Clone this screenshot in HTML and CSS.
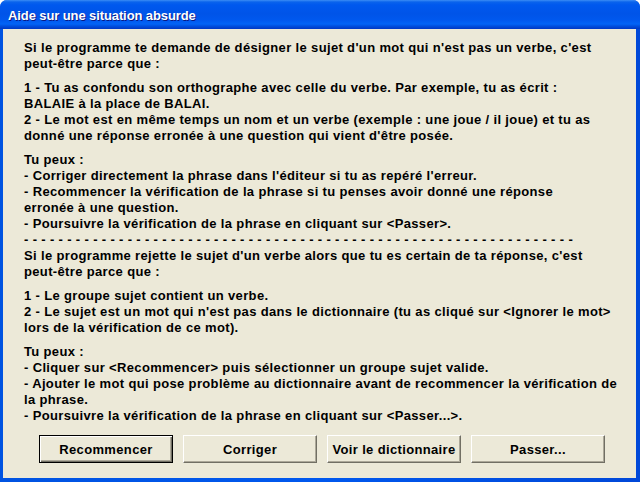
FILE: index.html
```html
<!DOCTYPE html>
<html lang="fr">
<head>
  <meta charset="UTF-8" />
  <title>Aide sur une situation absurde</title>
  <link rel="stylesheet" href="styles.css">
</head>
<body>
  <div class="window">
    <div class="titlebar">Aide sur une situation absurde</div>

    <div class="dialog">
      <div class="help-text">
        <p>Si le programme te demande de désigner le sujet d'un mot qui n'est pas un verbe, c'est<br>peut-être parce que :</p>
        <p>1 - Tu as confondu son orthographe avec celle du verbe. Par exemple, tu as écrit :<br>BALAIE à la place de BALAI.<br>2 - Le mot est en même temps un nom et un verbe (exemple : une joue / il joue) et tu as<br>donné une réponse erronée à une question qui vient d'être posée.</p>
        <p class="tight">Tu peux :<br>- Corriger directement la phrase dans l'éditeur si tu as repéré l'erreur.<br>- Recommencer la vérification de la phrase si tu penses avoir donné une réponse<br>erronée à une question.<br>- Poursuivre la vérification de la phrase en cliquant sur &lt;Passer&gt;.</p>
        <div class="separator">- - - - - - - - - - - - - - - - - - - - - - - - - - - - - - - - - - - - - - - - - - - - - - - - - - - - - - - - - - - - - - - -</div>
        <p>Si le programme rejette le sujet d'un verbe alors que tu es certain de ta réponse, c'est<br>peut-être parce que :</p>
        <p>1 - Le groupe sujet contient un verbe.<br>2 - Le sujet est un mot qui n'est pas dans le dictionnaire (tu as cliqué sur &lt;Ignorer le mot&gt;<br>lors de la vérification de ce mot).</p>
        <p class="tight">Tu peux :<br>- Cliquer sur &lt;Recommencer&gt; puis sélectionner un groupe sujet valide.<br>- Ajouter le mot qui pose problème au dictionnaire avant de recommencer la vérification de<br>la phrase.<br>- Poursuivre la vérification de la phrase en cliquant sur &lt;Passer...&gt;.</p>
      </div>

      <div class="buttons">
        <button class="btn default">Recommencer</button>
        <button class="btn">Corriger</button>
        <button class="btn">Voir le dictionnaire</button>
        <button class="btn">Passer...</button>
      </div>
    </div>
  </div>
</body>
</html>
```

FILE: styles.css
```css
body {
  margin: 0;
  width: 640px;
  height: 482px;
  overflow: hidden;
  font-family: "Liberation Sans", Arial, sans-serif;
}

.window {
  width: 640px;
  height: 482px;
  box-sizing: border-box;
  display: flex;
  flex-direction: column;
  padding: 0 4px 4px 3px;
  background: linear-gradient(to right, #0053e1, #0058ee 50%, #0048d8);
  border-radius: 7px 7px 0 0;
  background-color: #0055e5;
}

.titlebar {
  height: 29px;
  margin: 0 -4px 0 -3px;
  padding-left: 8px;
  box-sizing: border-box;
  display: flex;
  align-items: center;
  padding-top: 1px;
  color: #fff;
  font-family: "Liberation Sans", Arial, sans-serif;
  font-weight: bold;
  font-size: 13px;
  letter-spacing: -0.1px;
  text-shadow: 1px 1px 0 #0a1883;
  border-radius: 7px 7px 0 0;
  background: linear-gradient(to bottom,
    #3c8df5 0,
    #0a63ec 2px,
    #0058ee 5px,
    #0054e8 14px,
    #0058ee 20px,
    #0264f6 24px,
    #0050df 26px,
    #0038c4 29px);
}

.dialog {
  flex: 1;
  background: #ece9d8;
  display: flex;
  flex-direction: column;
  padding: 11px 0 0 21px;
}

.help-text p {
  margin: 0 0 8px;
}

.help-text,
.separator {
  font-size: 13px;
  font-weight: bold;
  letter-spacing: 0.35px;
  line-height: 16px;
  color: #000;
  white-space: nowrap;
}

.help-text p.tight {
  margin-bottom: 0;
}

.buttons {
  display: flex;
  gap: 10px;
  margin: 11px 0 0 15px;
}

.btn {
  width: 134px;
  height: 28px;
  padding: 0;
  font-family: "Liberation Sans", Arial, sans-serif;
  font-size: 13px;
  font-weight: bold;
  letter-spacing: 0.35px;
  color: #000;
  background: #ece9d8;
  border: 1px solid;
  border-color: #fff #716f64 #716f64 #fff;
  box-shadow: inset -1px -1px 0 #aca899;
}

.btn.default {
  border: 1px solid #000;
  box-shadow: inset 1px 1px 0 #fff, inset -1px -1px 0 #716f64, inset -2px -2px 0 #aca899;
}
```
